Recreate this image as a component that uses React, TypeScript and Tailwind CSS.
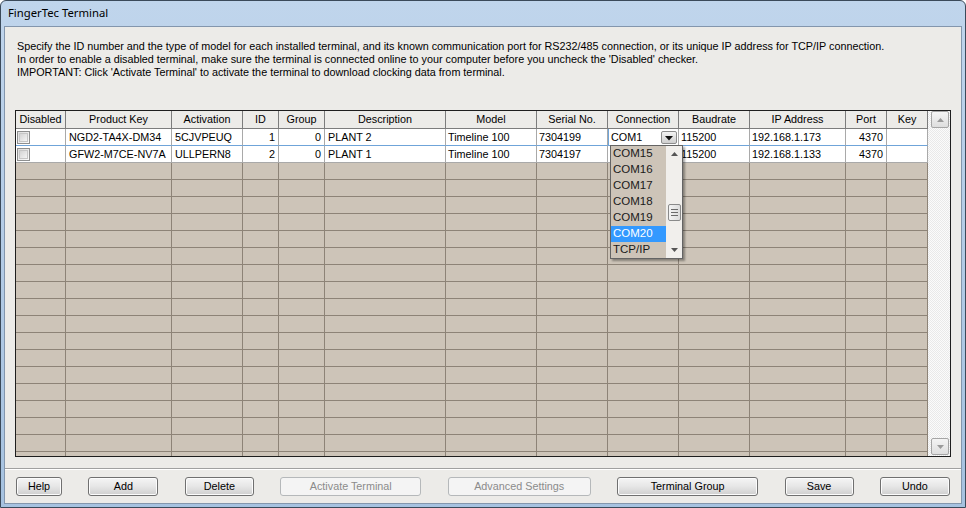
import React from "react";

const GRID =
  "grid grid-cols-[50px_106px_71px_36px_46px_121px_91px_71px_71px_71px_96px_41px_41px]";

const headers = [
  "Disabled",
  "Product Key",
  "Activation",
  "ID",
  "Group",
  "Description",
  "Model",
  "Serial No.",
  "Connection",
  "Baudrate",
  "IP Address",
  "Port",
  "Key",
];

type Row = {
  key: string;
  act: string;
  id: string;
  group: string;
  desc: string;
  model: string;
  serial: string;
  conn: string;
  baud: string;
  ip: string;
  port: string;
};

const rows: Row[] = [
  {
    key: "NGD2-TA4X-DM34",
    act: "5CJVPEUQ",
    id: "1",
    group: "0",
    desc: "PLANT 2",
    model: "Timeline 100",
    serial: "7304199",
    conn: "COM1",
    baud: "115200",
    ip: "192.168.1.173",
    port: "4370",
  },
  {
    key: "GFW2-M7CE-NV7A",
    act: "ULLPERN8",
    id: "2",
    group: "0",
    desc: "PLANT 1",
    model: "Timeline 100",
    serial: "7304197",
    conn: "",
    baud: "115200",
    ip: "192.168.1.133",
    port: "4370",
  },
];

function Checkbox() {
  return (
    <div className="ml-[1px] mt-[1px] h-[13px] w-[13px] border border-[#8e8f8f] bg-gradient-to-br from-[#dcdcdc] to-[#fbfbfb] p-[1px]">
      <div className="h-full w-full border border-[#c6c6c6] bg-gradient-to-br from-[#d4d4d4] to-[#f4f4f4]" />
    </div>
  );
}

function Btn({ label, w, disabled }: { label: string; w: string; disabled?: boolean }) {
  if (disabled) {
    return (
      <div
        className={`${w} flex h-[19px] items-center justify-center rounded-[3px] border border-[#b5b8ba] bg-[#f4f4f4] text-[10.8px] text-[#8b8b8b]`}
      >
        {label}
      </div>
    );
  }
  return (
    <div
      className={`${w} flex h-[19px] items-center justify-center rounded-[3px] border border-[#707070] bg-gradient-to-b from-[#f5f5f5] via-[#e6e6e6] to-[#cfcfcf] text-[10.8px] text-black shadow-[inset_0_0_0_1px_#fcfcfc]`}
    >
      {label}
    </div>
  );
}

function UpArrow({ color = "#9a9a9a" }: { color?: string }) {
  return (
    <svg width="7" height="4" viewBox="0 0 7 4">
      <path d="M0 4 L3.5 0 L7 4 Z" fill={color} />
    </svg>
  );
}
function DownArrow({ color = "#9a9a9a" }: { color?: string }) {
  return (
    <svg width="7" height="4" viewBox="0 0 7 4">
      <path d="M0 0 L3.5 4 L7 0 Z" fill={color} />
    </svg>
  );
}

function DropdownList() {
  const items = ["COM15", "COM16", "COM17", "COM18", "COM19", "COM20", "TCP/IP"];
  return (
    <div className="absolute left-[1px] top-[16px] z-10 flex h-[114px] w-[73px] border border-[#646464] bg-[#cdc4b8] shadow-[2px_2px_2px_rgba(0,0,0,0.35)]">
      <div className="flex w-[55px] flex-col">
        {items.map((it) => (
          <div
            key={it}
            className={`flex h-[16px] items-center pl-[2px] text-[11.5px] ${
              it === "COM20" ? "bg-[#3399ff] text-white" : "text-[#1a1a1a]"
            }`}
          >
            {it}
          </div>
        ))}
      </div>
      <div className="flex w-[16px] flex-col items-center bg-[#f1efec]">
        <div className="flex h-[16px] items-center justify-center">
          <UpArrow color="#555" />
        </div>
        <div className="h-[42px]" />
        <div className="flex h-[17px] w-[13px] flex-col items-center justify-center gap-[2px] rounded-[2px] border border-[#8a8a8a] bg-gradient-to-r from-[#f4f4f4] to-[#dcdcdc]">
          <div className="h-[1px] w-[7px] bg-[#6a6a6a]" />
          <div className="h-[1px] w-[7px] bg-[#6a6a6a]" />
          <div className="h-[1px] w-[7px] bg-[#6a6a6a]" />
        </div>
        <div className="flex-1" />
        <div className="flex h-[16px] items-center justify-center">
          <DownArrow color="#555" />
        </div>
      </div>
    </div>
  );
}

function DataRow({ r, first }: { r: Row; first: boolean }) {
  const b = first ? "border-b-[#6fa4d9]" : "border-b-[#a9a9a9]";
  const cell = `h-[17px] border-r border-b border-r-[#a9a9a9] ${b} bg-white flex items-center overflow-hidden whitespace-nowrap text-[10.8px] text-black`;
  return (
    <div className={GRID}>
      <div className={cell}>
        <Checkbox />
      </div>
      <div className={`${cell} pl-[3px]`}>{r.key}</div>
      <div className={`${cell} pl-[3px]`}>{r.act}</div>
      <div className={`${cell} justify-end pr-[3px]`}>{r.id}</div>
      <div className={`${cell} justify-end pr-[3px]`}>{r.group}</div>
      <div className={`${cell} pl-[3px]`}>{r.desc}</div>
      <div className={`${cell} pl-[2px]`}>{r.model}</div>
      <div className={`${cell} pl-[2px]`}>{r.serial}</div>
      {first ? (
        <div className="relative h-[17px] border-b border-l border-r border-b-[#6fa4d9] border-l-[#6fa4d9] border-r-[#a9a9a9] bg-white text-[10.8px] text-black">
          <div className="flex h-full items-center justify-between pl-[2px] pr-[1px]">
            <span>{r.conn}</span>
            <div className="flex h-[13px] w-[16px] items-end justify-center rounded-[2px] border border-[#8c8c8c] bg-gradient-to-b from-[#f3f3f3] to-[#cfcfcf] pb-[2px]">
              <svg width="8" height="5" viewBox="0 0 8 5">
                <path d="M0 0 L4 4.5 L8 0 Z" fill="#111" />
              </svg>
            </div>
          </div>
          <DropdownList />
        </div>
      ) : (
        <div className={`${cell} pl-[2px]`}>{r.conn}</div>
      )}
      <div className={`${cell} pl-[2px]`}>{r.baud}</div>
      <div className={`${cell} pl-[2px]`}>{r.ip}</div>
      <div className={`${cell} justify-end pr-[3px]`}>{r.port}</div>
      <div className={`${cell} ${first ? "border-r-[#6fa4d9]" : ""}`} />
    </div>
  );
}

function EmptyRow() {
  return (
    <div className={GRID}>
      {headers.map((h) => (
        <div key={h} className="h-[17px] border-b border-r border-[#8d8377] bg-[#cdc4b8]" />
      ))}
    </div>
  );
}

export default function App() {
  const empties = Array.from({ length: 19 }, (_, i) => i);
  return (
    <div className="flex h-[508px] w-[966px] flex-col overflow-hidden rounded-t-[6px] border border-[#3b4a5a] bg-gradient-to-b from-[#c0d5ec] to-[#a6c2e0] font-['Liberation_Sans',Arial,sans-serif]">
      {/* title bar */}
      <div className="flex h-[25px] shrink-0 items-center pl-[7px] font-['Noto_Sans',sans-serif] text-[11.3px] text-black">
        FingerTec Terminal
      </div>
      {/* content */}
      <div className="mx-[3px] mb-[3px] flex flex-1 flex-col border border-[#8396ad] bg-[#ecebe8]">
        <div className="pl-[12px] pt-[13px] text-[10.8px] leading-[13px] text-black">
          <div>
            Specify the ID number and the type of model for each installed terminal, and its known communication port for
            RS232/485 connection, or its unique IP address for TCP/IP connection.
          </div>
          <div>
            In order to enable a disabled terminal, make sure the terminal is connected online to your computer before you
            uncheck the 'Disabled' checker.
          </div>
          <div>IMPORTANT: Click 'Activate Terminal' to activate the terminal to download clocking data from terminal.</div>
        </div>

        {/* table */}
        <div className="mx-[10px] mt-[31px] flex h-[347px] border border-[#1e1e1e] bg-[#cdc4b8]">
          <div className="w-[912px] overflow-hidden">
            <div className={GRID}>
              {headers.map((h) => (
                <div
                  key={h}
                  className="flex h-[18px] items-center justify-center border-b border-r border-[#7c7c7c] bg-[#ecebe8] text-[10.8px] text-black"
                >
                  {h}
                </div>
              ))}
            </div>
            {rows.map((r, i) => (
              <DataRow key={r.key} r={r} first={i === 0} />
            ))}
            {empties.map((i) => (
              <EmptyRow key={i} />
            ))}
          </div>
          {/* scrollbar */}
          <div className="flex w-[22px] flex-col bg-[repeating-conic-gradient(#e9e9e9_0%_25%,#fbfbfb_0%_50%)] bg-[length:2px_2px] pl-[3px] pr-[1px]">
            <div className="flex h-[17px] items-center justify-center rounded-[2px] border border-[#a5a5a5] bg-gradient-to-b from-[#f4f4f4] to-[#dedede]">
              <UpArrow />
            </div>
            <div className="flex-1" />
            <div className="mb-[1px] flex h-[17px] items-center justify-center rounded-[2px] border border-[#a5a5a5] bg-gradient-to-b from-[#f4f4f4] to-[#dedede]">
              <DownArrow />
            </div>
          </div>
        </div>

        {/* separator */}
        <div className="mt-[11px] border-t border-[#a0a0a0] shadow-[0_1px_0_#ffffff]" />

        {/* buttons */}
        <div className="mt-[8px] flex justify-between px-[11px]">
          <Btn label="Help" w="w-[46px]" />
          <Btn label="Add" w="w-[70px]" />
          <Btn label="Delete" w="w-[69px]" />
          <Btn label="Activate Terminal" w="w-[141px]" disabled />
          <Btn label="Advanced Settings" w="w-[143px]" disabled />
          <Btn label="Terminal Group" w="w-[141px]" />
          <Btn label="Save" w="w-[69px]" />
          <Btn label="Undo" w="w-[70px]" />
        </div>
      </div>
    </div>
  );
}
